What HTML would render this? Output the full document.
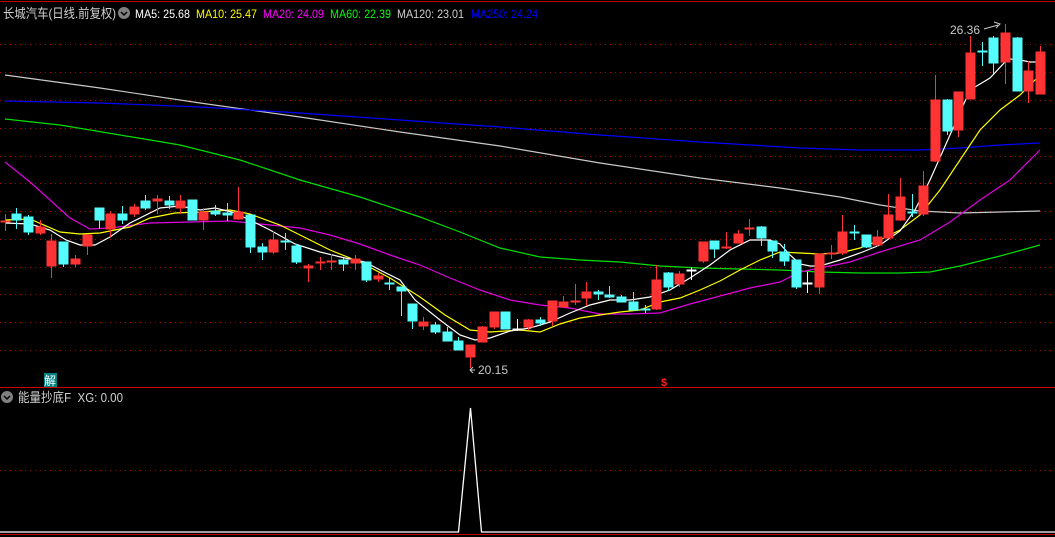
<!DOCTYPE html>
<html><head><meta charset="utf-8"><style>
html,body{margin:0;padding:0;background:#000;}
svg{display:block;}
text{font-family:"Liberation Sans","Noto Sans CJK SC",sans-serif;font-size:12px;}
</style></head><body>
<svg width="1055" height="537" viewBox="0 0 1055 537" xmlns="http://www.w3.org/2000/svg">
<rect width="1055" height="537" fill="#000"/>
<line x1="0" y1="1.5" x2="1055" y2="1.5" stroke="#c00000"/>
<g stroke="#b00000" stroke-dasharray="1,4" shape-rendering="crispEdges">
<line x1="0" y1="44.5" x2="1055" y2="44.5"/><line x1="0" y1="72.5" x2="1055" y2="72.5"/>
<line x1="0" y1="100.5" x2="1055" y2="100.5"/><line x1="0" y1="128.5" x2="1055" y2="128.5"/>
<line x1="0" y1="156.5" x2="1055" y2="156.5"/><line x1="0" y1="183.5" x2="1055" y2="183.5"/>
<line x1="0" y1="211.5" x2="1055" y2="211.5"/><line x1="0" y1="239.5" x2="1055" y2="239.5"/>
<line x1="0" y1="267.5" x2="1055" y2="267.5"/><line x1="0" y1="294.5" x2="1055" y2="294.5"/>
<line x1="0" y1="322.5" x2="1055" y2="322.5"/><line x1="0" y1="350.5" x2="1055" y2="350.5"/>
<line x1="0" y1="470.5" x2="1055" y2="470.5"/>
</g>
<line x1="0" y1="387.5" x2="1055" y2="387.5" stroke="#d00000"/>
<g fill="none" stroke-width="1.2">
<polyline stroke="#c8c8c8" points="5,75 100,88 200,103 300,117 400,132 500,146 600,163 700,178 780,188 840,197 880,205 920,211 960,213 1000,212 1040,211"/>
<polyline stroke="#0000ff" points="5,101 100,103 200,107 300,113 400,120 500,127 600,135 700,142 800,148 860,150 920,150 960,148 1000,145 1040,143"/>
<polyline stroke="#00e000" points="5,119 60,125 120,135 180,145 240,160 300,180 360,197 420,217 460,232 500,248 540,257 580,260 620,262 660,266 700,268 740,269 780,270 820,272 860,273 900,273 930,272 960,266 1000,256 1040,245"/>
<polyline stroke="#e000e0" points="5,162 30,182 50,200 70,218 90,229 110,228 150,223 190,222 230,221 260,224 300,228 330,235 360,244 390,255 420,265 450,278 480,290 510,300 540,305 570,308 600,314 630,314 660,313 690,304 720,296 750,288 780,282 800,272 820,268 850,262 880,252 920,240 950,222 980,200 1010,180 1040,150"/>
<polyline stroke="#ffff00" points="5,220 30,219 60,232 80,234 100,233 130,227 150,218 175,213 200,212 230,210 250,214 280,225 300,235 330,250 360,262 390,278 420,297 445,315 470,330 490,332 520,330 540,332 560,324 580,318 600,315 620,312 640,310 660,302 680,298 700,290 720,281 740,270 760,260 780,252 800,253 820,254 840,253 860,248 880,240 900,230 920,215 940,190 960,160 980,130 1000,110 1020,95 1040,75"/>
<polyline stroke="#ffffff" points="5,223 30,224 50,230 66,240 80,245 95,245 110,237 130,223 160,208 180,206 200,210 215,208 232,212 250,220 270,230 295,244 320,252 345,258 365,262 380,270 400,280 415,300 440,320 460,335 475,340 490,338 510,331 530,328 550,322 570,313 590,305 610,300 630,300 650,297 670,290 690,278 710,265 730,250 750,240 770,240 780,244 790,255 800,264 810,266 820,266 840,260 860,253 880,245 900,231 915,210 930,180 950,135 970,90 990,78 1005,62 1010,59 1020,60 1030,62 1040,62"/>
</g>
<g shape-rendering="crispEdges">
<g stroke="#ff3333" fill="#ff3333">
<line x1="5.5" y1="214" x2="5.5" y2="231"/><rect x="1" y="221" width="9" height="1"/>
<line x1="40.5" y1="220" x2="40.5" y2="235"/><rect x="36" y="227" width="9" height="6"/>
<line x1="51.5" y1="234" x2="51.5" y2="278"/><rect x="47" y="241" width="9" height="25"/>
<line x1="75.5" y1="255" x2="75.5" y2="267"/><rect x="71" y="259" width="9" height="5"/>
<line x1="87.5" y1="235" x2="87.5" y2="255"/><rect x="83" y="235" width="9" height="11"/>
<line x1="110.5" y1="211" x2="110.5" y2="237"/><rect x="106" y="214" width="9" height="15"/>
<line x1="134.5" y1="204" x2="134.5" y2="217"/><rect x="130" y="207" width="9" height="7"/>
<line x1="157.5" y1="195" x2="157.5" y2="214"/><rect x="153" y="199" width="9" height="2"/>
<line x1="180.5" y1="195" x2="180.5" y2="214"/><rect x="176" y="201" width="9" height="7"/>
<line x1="203.5" y1="208" x2="203.5" y2="230"/><rect x="199" y="212" width="9" height="8"/>
<line x1="238.5" y1="187" x2="238.5" y2="220"/><rect x="234" y="212" width="9" height="7"/>
<line x1="273.5" y1="231" x2="273.5" y2="254"/><rect x="269" y="240" width="9" height="12"/>
<line x1="308.5" y1="264" x2="308.5" y2="282"/><rect x="304" y="266" width="9" height="2"/>
<line x1="320.5" y1="257" x2="320.5" y2="270"/><rect x="316" y="262" width="9" height="1"/>
<line x1="331.5" y1="254" x2="331.5" y2="270"/><rect x="327" y="261" width="9" height="1"/>
<line x1="355.5" y1="255" x2="355.5" y2="270"/><rect x="351" y="259" width="9" height="4"/>
<line x1="378.5" y1="273" x2="378.5" y2="282"/><rect x="374" y="276" width="9" height="3"/>
<line x1="423.5" y1="317" x2="423.5" y2="330"/><rect x="419" y="322" width="9" height="4"/>
<line x1="470.5" y1="345" x2="470.5" y2="368"/><rect x="466" y="345" width="9" height="12"/>
<line x1="482.5" y1="326" x2="482.5" y2="342"/><rect x="478" y="327" width="9" height="15"/>
<line x1="494.5" y1="312" x2="494.5" y2="329"/><rect x="490" y="312" width="9" height="15"/>
<line x1="528.5" y1="319" x2="528.5" y2="330"/><rect x="524" y="320" width="9" height="7"/>
<line x1="552.5" y1="301" x2="552.5" y2="326"/><rect x="548" y="301" width="9" height="20"/>
<line x1="563.5" y1="296" x2="563.5" y2="307"/><rect x="559" y="302" width="9" height="5"/>
<line x1="575.5" y1="284" x2="575.5" y2="305"/><rect x="571" y="301" width="9" height="1"/>
<line x1="586.5" y1="282" x2="586.5" y2="306"/><rect x="582" y="292" width="9" height="6"/>
<line x1="656.5" y1="265" x2="656.5" y2="310"/><rect x="652" y="280" width="9" height="29"/>
<line x1="679.5" y1="271" x2="679.5" y2="287"/><rect x="675" y="274" width="9" height="10"/>
<line x1="703.5" y1="242" x2="703.5" y2="263"/><rect x="699" y="242" width="9" height="19"/>
<line x1="726.5" y1="232" x2="726.5" y2="249"/><rect x="722" y="247" width="9" height="1"/>
<line x1="738.5" y1="230" x2="738.5" y2="243"/><rect x="734" y="234" width="9" height="9"/>
<line x1="749.5" y1="219" x2="749.5" y2="236"/><rect x="745" y="228" width="9" height="1"/>
<line x1="819.5" y1="254" x2="819.5" y2="294"/><rect x="815" y="254" width="9" height="33"/>
<line x1="831.5" y1="245" x2="831.5" y2="259"/><rect x="827" y="253" width="9" height="1"/>
<line x1="842.5" y1="215" x2="842.5" y2="255"/><rect x="838" y="232" width="9" height="21"/>
<line x1="877.5" y1="230" x2="877.5" y2="247"/><rect x="873" y="237" width="9" height="8"/>
<line x1="888.5" y1="194" x2="888.5" y2="238"/><rect x="884" y="215" width="9" height="23"/>
<line x1="900.5" y1="178" x2="900.5" y2="221"/><rect x="896" y="197" width="9" height="23"/>
<line x1="923.5" y1="171" x2="923.5" y2="216"/><rect x="919" y="186" width="9" height="28"/>
<line x1="935.5" y1="75" x2="935.5" y2="162"/><rect x="931" y="100" width="9" height="61"/>
<line x1="958.5" y1="92" x2="958.5" y2="137"/><rect x="954" y="92" width="9" height="38"/>
<line x1="970.5" y1="36" x2="970.5" y2="99"/><rect x="966" y="53" width="9" height="46"/>
<line x1="1005.5" y1="24" x2="1005.5" y2="84"/><rect x="1001" y="33" width="9" height="29"/>
<line x1="1028.5" y1="61" x2="1028.5" y2="103"/><rect x="1024" y="71" width="9" height="20"/>
<line x1="1040.5" y1="46" x2="1040.5" y2="94"/><rect x="1036" y="52" width="9" height="42"/>
</g>
<g stroke="#54fcfc" fill="#54fcfc">
<line x1="16.5" y1="208" x2="16.5" y2="229"/><rect x="12" y="214" width="9" height="6"/>
<line x1="28.5" y1="215" x2="28.5" y2="235"/><rect x="24" y="217" width="9" height="15"/>
<line x1="63.5" y1="242" x2="63.5" y2="267"/><rect x="59" y="242" width="9" height="22"/>
<line x1="99.5" y1="208" x2="99.5" y2="229"/><rect x="95" y="208" width="9" height="12"/>
<line x1="122.5" y1="206" x2="122.5" y2="224"/><rect x="118" y="214" width="9" height="6"/>
<line x1="145.5" y1="195" x2="145.5" y2="210"/><rect x="141" y="201" width="9" height="7"/>
<line x1="169.5" y1="196" x2="169.5" y2="209"/><rect x="165" y="201" width="9" height="4"/>
<line x1="192.5" y1="200" x2="192.5" y2="220"/><rect x="188" y="200" width="9" height="20"/>
<line x1="215.5" y1="205" x2="215.5" y2="216"/><rect x="211" y="211" width="9" height="3"/>
<line x1="227.5" y1="203" x2="227.5" y2="221"/><rect x="223" y="213" width="9" height="2"/>
<line x1="250.5" y1="215" x2="250.5" y2="253"/><rect x="246" y="215" width="9" height="32"/>
<line x1="262.5" y1="243" x2="262.5" y2="260"/><rect x="258" y="247" width="9" height="5"/>
<line x1="285.5" y1="233" x2="285.5" y2="250"/><rect x="281" y="241" width="9" height="1"/>
<line x1="296.5" y1="244" x2="296.5" y2="264"/><rect x="292" y="246" width="9" height="16"/>
<line x1="343.5" y1="258" x2="343.5" y2="271"/><rect x="339" y="260" width="9" height="4"/>
<line x1="366.5" y1="262" x2="366.5" y2="282"/><rect x="362" y="262" width="9" height="18"/>
<line x1="389.5" y1="277" x2="389.5" y2="290"/><rect x="385" y="283" width="9" height="1"/>
<line x1="401.5" y1="287" x2="401.5" y2="316"/><rect x="397" y="287" width="9" height="4"/>
<line x1="412.5" y1="304" x2="412.5" y2="329"/><rect x="408" y="304" width="9" height="17"/>
<line x1="435.5" y1="322" x2="435.5" y2="334"/><rect x="431" y="325" width="9" height="7"/>
<line x1="447.5" y1="327" x2="447.5" y2="341"/><rect x="443" y="332" width="9" height="9"/>
<line x1="458.5" y1="337" x2="458.5" y2="350"/><rect x="454" y="341" width="9" height="9"/>
<line x1="505.5" y1="312" x2="505.5" y2="329"/><rect x="501" y="312" width="9" height="17"/>
<line x1="540.5" y1="317" x2="540.5" y2="326"/><rect x="536" y="320" width="9" height="3"/>
<line x1="598.5" y1="290" x2="598.5" y2="300"/><rect x="594" y="292" width="9" height="2"/>
<line x1="609.5" y1="286" x2="609.5" y2="298"/><rect x="605" y="295" width="9" height="2"/>
<line x1="621.5" y1="295" x2="621.5" y2="302"/><rect x="617" y="297" width="9" height="5"/>
<line x1="633.5" y1="292" x2="633.5" y2="310"/><rect x="629" y="302" width="9" height="8"/>
<line x1="645.5" y1="305" x2="645.5" y2="313"/><rect x="641" y="309" width="9" height="1"/>
<line x1="668.5" y1="272" x2="668.5" y2="291"/><rect x="664" y="273" width="9" height="14"/>
<line x1="714.5" y1="241" x2="714.5" y2="258"/><rect x="710" y="241" width="9" height="8"/>
<line x1="761.5" y1="226" x2="761.5" y2="246"/><rect x="757" y="227" width="9" height="11"/>
<line x1="772.5" y1="241" x2="772.5" y2="258"/><rect x="768" y="241" width="9" height="10"/>
<line x1="784.5" y1="244" x2="784.5" y2="266"/><rect x="780" y="252" width="9" height="9"/>
<line x1="796.5" y1="260" x2="796.5" y2="289"/><rect x="792" y="260" width="9" height="27"/>
<line x1="854.5" y1="225" x2="854.5" y2="240"/><rect x="850" y="232" width="9" height="1"/>
<line x1="866.5" y1="235" x2="866.5" y2="248"/><rect x="862" y="235" width="9" height="12"/>
<line x1="912.5" y1="194" x2="912.5" y2="217"/><rect x="908" y="212" width="9" height="1"/>
<line x1="947.5" y1="99" x2="947.5" y2="135"/><rect x="943" y="100" width="9" height="31"/>
<line x1="982.5" y1="42" x2="982.5" y2="66"/><rect x="978" y="51" width="9" height="1"/>
<line x1="993.5" y1="36" x2="993.5" y2="74"/><rect x="989" y="38" width="9" height="25"/>
<line x1="1017.5" y1="37" x2="1017.5" y2="91"/><rect x="1013" y="38" width="9" height="53"/>
</g>
<g stroke="#ffffff" fill="#ffffff">
<line x1="517.5" y1="319" x2="517.5" y2="331"/><rect x="513" y="329" width="9" height="1"/>
<line x1="691.5" y1="267" x2="691.5" y2="280"/><rect x="687" y="270" width="9" height="1"/>
<line x1="807.5" y1="272" x2="807.5" y2="293"/><rect x="803" y="283" width="9" height="1"/>
</g>
</g>
<text x="950" y="34" fill="#c8c8c8">26.36</text>
<path d="M984,29 L998,25 M994,22 L1000,24 L996,28" stroke="#c8c8c8" fill="none"/>
<path d="M475,370 L470,370 M473,367 L470,370 L473,373" stroke="#c8c8c8" fill="none"/>
<text x="478" y="374" fill="#c8c8c8">20.15</text>
<rect x="44" y="373" width="13" height="14" fill="#008080"/>
<text x="44" y="385" fill="#ffffff">解</text>
<text x="661" y="386" fill="#ff2020" style="font-size:11px;font-weight:bold">$</text>
<text x="3" y="18" fill="#d0d0d0" style="font-size:13px" textLength="113" lengthAdjust="spacingAndGlyphs">长城汽车(日线.前复权)</text>
<circle cx="124" cy="13" r="6" fill="#808080"/>
<path d="M121,12 L124,15 L127,12" stroke="#000" stroke-width="1.5" fill="none"/>
<text x="135" y="18" fill="#ffffff" textLength="55" lengthAdjust="spacingAndGlyphs">MA5: 25.68</text>
<text x="196" y="18" fill="#ffff00" textLength="61" lengthAdjust="spacingAndGlyphs">MA10: 25.47</text>
<text x="263" y="18" fill="#ff00ff" textLength="61" lengthAdjust="spacingAndGlyphs">MA20: 24.09</text>
<text x="330" y="18" fill="#00ff00" textLength="61" lengthAdjust="spacingAndGlyphs">MA60: 22.39</text>
<text x="397" y="18" fill="#d0d0d0" textLength="67" lengthAdjust="spacingAndGlyphs">MA120: 23.01</text>
<text x="471" y="18" fill="#0000ff" textLength="67" lengthAdjust="spacingAndGlyphs">MA250: 24.24</text>
<circle cx="7" cy="397" r="6" fill="#808080"/>
<path d="M4,396 L7,399 L10,396" stroke="#000" stroke-width="1.5" fill="none"/>
<text x="18" y="402" fill="#d0d0d0" style="font-size:13px" textLength="105" lengthAdjust="spacingAndGlyphs">能量抄底F&#160; XG: 0.00</text>
<polyline points="0,532 458.5,532 470.5,408 481.5,532 1055,532" stroke="#ffffff" stroke-width="1.3" fill="none"/>
<line x1="0" y1="534.5" x2="1055" y2="534.5" stroke="#c00000"/>
</svg>
</body></html>
